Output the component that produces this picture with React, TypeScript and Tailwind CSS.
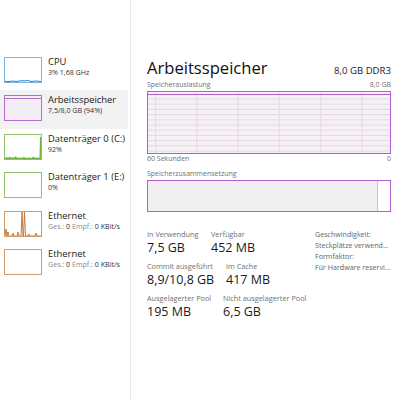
import React from 'react';

const font = { fontFamily: '"Open Sans", "Noto Sans", sans-serif' };

type Item = {
  title: string;
  sub: React.ReactNode;
  color: string;
  kind: 'cpu' | 'mem' | 'disk0' | 'disk1' | 'eth1' | 'eth2';
};

const netSub = (
  <>
    <span className="text-[#8a8a8a]">Ges.:</span> 0 <span className="text-[#8a8a8a]">Empf.:</span> 0 KBit/s
  </>
);

const items: Item[] = [
  { title: 'CPU', sub: '3% 1,68 GHz', color: '#79b7e4', kind: 'cpu' },
  { title: 'Arbeitsspeicher', sub: '7,5/8,0 GB (94%)', color: '#b86ccf', kind: 'mem' },
  { title: 'Datenträger 0 (C:)', sub: '92%', color: '#8fc56c', kind: 'disk0' },
  { title: 'Datenträger 1 (E:)', sub: '0%', color: '#8fc56c', kind: 'disk1' },
  { title: 'Ethernet', sub: netSub, color: '#d49c6b', kind: 'eth1' },
  { title: 'Ethernet', sub: netSub, color: '#d49c6b', kind: 'eth2' },
];

function Thumb({ item }: { item: Item }) {
  const c = item.color;
  return (
    <svg width="38" height="26" viewBox="0 0 38 26" className="block shrink-0">
      {item.kind === 'mem' && <rect x="1" y="3" width="36" height="22" fill="#f1edf2" />}
      {item.kind === 'mem' && <line x1="1" y1="3.5" x2="37" y2="3.5" stroke="#b86ccf" strokeWidth="1" />}
      {item.kind === 'cpu' && (
        <polyline
          points="1,24.5 6,24.5 8,24 12,24.5 16,24 18,23.5 20,24 24,23.5 27,24.5 32,24 37,24.5"
          fill="none"
          stroke="#2a87d0"
          strokeWidth="1"
        />
      )}
      {item.kind === 'disk0' && (
        <polygon
          points="1,25 1,24 3,23 4,24 6,22.5 7,24 9,23 10,24 12,22 13,24 15,23.5 17,24 20,23 22,24 25,23.5 27,24 30,22.5 31,24 34,23.5 35.5,24 36,3 37,3 37,25"
          fill="#6fb33f"
        />
      )}
      {item.kind === 'eth1' && (
        <polyline
          points="1,25 2,18 3,25 4,21 5,25 8,25 9,22 10,25 13,25 14,21 15,25 17,25 18,1 19,25 19.5,25 20.5,1 21.5,25 24,25 25,23 26,25 31,25 32,22 33,25 37,25"
          fill="none"
          stroke="#b9702f"
          strokeWidth="0.9"
        />
      )}
      <rect x="0.5" y="0.5" width="37" height="25" fill="none" stroke={c} strokeWidth="1" />
    </svg>
  );
}

function MainGraph() {
  const w = 244;
  const h = 63;
  const hLines: number[] = [];
  for (let y = 8; y < h; y += 5.2) hLines.push(y);
  const vLines = [8.7, 49.7, 91, 132, 173.7, 215];
  return (
    <svg width={w} height={h} viewBox={`0 0 ${w} ${h}`} className="block">
      <rect x="0" y="0" width={w} height={h} fill="#f5f1f5" />
      {hLines.map((y) => (
        <line key={y} x1="0" y1={y} x2={w} y2={y} stroke="#e6d6ea" strokeWidth="1" />
      ))}
      {vLines.map((x) => (
        <line key={x} x1={x} y1="0" x2={x} y2={h} stroke="#e6d6ea" strokeWidth="1" />
      ))}
      <line x1="0" y1="3.5" x2={w} y2="3.5" stroke="#b25ccd" strokeWidth="1" />
      <rect x="0.5" y="0.5" width={w - 1} height={h - 1} fill="none" stroke="#b25ccd" strokeWidth="1" />
    </svg>
  );
}

function Stat({ label, value, w }: { label: string; value: string; w?: string }) {
  return (
    <div className={w}>
      <div className="h-[10px] text-[7.3px] leading-[10px] text-[#707070] whitespace-nowrap">{label}</div>
      <div className="h-[17px] text-[12.5px] leading-[17px] text-[#1a1a1a] whitespace-nowrap">{value}</div>
    </div>
  );
}

export default function App() {
  return (
    <div className="flex w-[400px] h-[400px] bg-white overflow-hidden" style={font}>
      {/* left list */}
      <div className="w-[131px] h-full border-r border-[#e6e6e6] pt-[52px]">
        {items.map((item, i) => (
          <div
            key={i}
            className={`flex h-[38.4px] w-[128px] pt-[5px] pl-[4px] gap-[6px] ${
              item.kind === 'mem' ? 'bg-[#f2f2f2]' : ''
            }`}
          >
            <Thumb item={item} />
            <div className="flex flex-col">
              <div className="h-[10px] text-[9.4px] leading-[10px] text-[#1a1a1a] whitespace-nowrap">{item.title}</div>
              <div className="h-[11px] text-[7.1px] leading-[11px] text-[#333] whitespace-nowrap">{item.sub}</div>
            </div>
          </div>
        ))}
      </div>

      {/* detail */}
      <div className="flex-1 pl-[16px] pr-[9px] pt-[56px]">
        <div className="flex h-[24px] items-baseline justify-between">
          <div className="text-[16.6px] leading-[24px] text-[#111]">Arbeitsspeicher</div>
          <div className="text-[9.6px] leading-[24px] text-[#1a1a1a]">8,0 GB DDR3</div>
        </div>
        <div className="flex h-[10px] justify-between text-[7px] leading-[10px] text-[#707070]">
          <span>Speicherauslastung</span>
          <span>8,0 GB</span>
        </div>
        <div className="mt-[1px]">
          <MainGraph />
        </div>
        <div className="flex h-[10px] justify-between text-[7px] leading-[10px] text-[#707070]">
          <span>60 Sekunden</span>
          <span>0</span>
        </div>
        <div className="mt-[5px] h-[10px] text-[7px] leading-[10px] text-[#707070]">Speicherzusammensetzung</div>
        <div className="mt-[1px] flex h-[32px] border border-[#b25ccd]">
          <div className="flex-1 bg-[#f2eff3] border-r border-[#d9b7e4]" />
          <div className="w-[12px] bg-white" />
        </div>

        <div className="mt-[17px] flex">
          <div className="flex-1 flex flex-col gap-[5px]">
            <div className="flex">
              <Stat label="In Verwendung" value="7,5 GB" w="w-[64px]" />
              <Stat label="Verfügbar" value="452 MB" />
            </div>
            <div className="flex">
              <Stat label="Commit ausgeführt" value="8,9/10,8 GB" w="w-[79px]" />
              <Stat label="Im Cache" value="417 MB" />
            </div>
            <div className="flex">
              <Stat label="Ausgelagerter Pool" value="195 MB" w="w-[76px]" />
              <Stat label="Nicht ausgelagerter Pool" value="6,5 GB" />
            </div>
          </div>
          <div className="w-[76px] flex flex-col text-[7.1px] leading-[11px] text-[#666] whitespace-nowrap">
            <div>Geschwindigkeit:</div>
            <div>Steckplätze verwend...</div>
            <div>Formfaktor:</div>
            <div>Für Hardware reservi...</div>
          </div>
        </div>
      </div>
    </div>
  );
}
